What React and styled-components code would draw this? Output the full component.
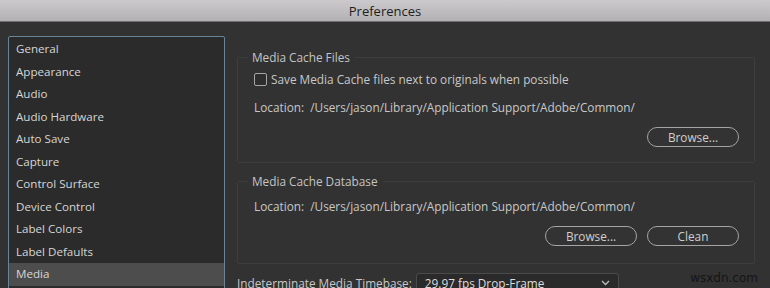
import styled, { createGlobalStyle } from "styled-components";

const GlobalStyle = createGlobalStyle`
  html, body {
    margin: 0;
    padding: 0;
    background: #323232;
    overflow: hidden;
  }
  body {
    font-family: "Open Sans", "DejaVu Sans", sans-serif;
  }
`;

const sections = [
  "General",
  "Appearance",
  "Audio",
  "Audio Hardware",
  "Auto Save",
  "Capture",
  "Control Surface",
  "Device Control",
  "Label Colors",
  "Label Defaults",
  "Media",
];

const cachePath = "/Users/jason/Library/Application Support/Adobe/Common/";

const Window = styled.div`
  width: 770px;
  height: 288px;
  display: flex;
  flex-direction: column;
  background: #323232;
  position: relative;
  overflow: hidden;
`;

const TitleBar = styled.div`
  height: 21px;
  flex: 0 0 auto;
  display: flex;
  align-items: center;
  justify-content: center;
  background: linear-gradient(#cbc9cb, #b3b1b3);
  border-bottom: 1px solid #6f6f6f;
  color: #1e1e1e;
  font-size: 13px;
`;

const Body = styled.div`
  display: flex;
  gap: 12px;
  padding: 14px 0 0 8px;
`;

const Sidebar = styled.ul`
  list-style: none;
  margin: 0;
  padding: 1px 0 0 0;
  width: 215px;
  height: 260px;
  flex: 0 0 auto;
  background: #2b2b2b;
  border: 1px solid #6a8598;
  border-radius: 2px;
`;

const SidebarItem = styled.li`
  height: 22.5px;
  line-height: 22.5px;
  padding-left: 7px;
  font-size: 11.6px;
  color: #d6d6d6;
  background: ${(p) => (p.$active ? "#4d4d4d" : "transparent")};
`;

const Content = styled.div`
  width: 518px;
  display: flex;
  flex-direction: column;
  gap: 11px;
  padding-top: 14px;
`;

const Group = styled.fieldset`
  margin: 0;
  padding: 0 15px 0 16px;
  border: 1px solid #3d3d3d;
  border-radius: 2px;
  height: ${(p) => p.$height}px;
  box-sizing: border-box;
`;

const Legend = styled.legend`
  margin-left: -7px;
  padding: 0 5px;
  font-size: 11.8px;
  line-height: 14px;
  color: #c4c4c4;
`;

const CheckRow = styled.label`
  display: flex;
  align-items: center;
  gap: 4px;
  margin-top: 7px;
  font-size: 11.8px;
  color: #c8c8c8;
`;

const Box = styled.span`
  width: 11px;
  height: 11px;
  border: 1px solid #a6a6a6;
  border-radius: 2px;
  background: #2e2e2e;
`;

const Location = styled.div`
  margin-top: ${(p) => p.$top}px;
  font-size: 11.8px;
  line-height: 16px;
  color: #c8c8c8;
  white-space: pre;
`;

const ButtonRow = styled.div`
  margin-top: ${(p) => p.$top}px;
  display: flex;
  justify-content: flex-end;
  gap: 10px;
`;

const PillButton = styled.button`
  width: 92px;
  height: 20px;
  padding: 0;
  border: 1.5px solid #a4a4a4;
  border-radius: 10px;
  background: #333333;
  color: #cfcfcf;
  font-family: inherit;
  font-size: 11.8px;
  line-height: 16px;
`;

const TimebaseRow = styled.div`
  display: flex;
  align-items: center;
  gap: 4px;
  margin-top: -2px;
  font-size: 11.8px;
  color: #c8c8c8;
`;

const Select = styled.div`
  width: 203px;
  height: 20px;
  box-sizing: border-box;
  display: flex;
  align-items: center;
  justify-content: space-between;
  padding: 0 8px;
  background: #2a2a2a;
  border: 1px solid #4a4a4a;
  border-radius: 3px;
  color: #dcdcdc;
  font-size: 11.8px;
`;

const Watermark = styled.div`
  position: absolute;
  right: 12px;
  bottom: 3px;
  font-family: "DejaVu Sans", sans-serif;
  font-size: 12px;
  color: #151515;
`;

const Chevron = () => (
  <svg width="9" height="6" viewBox="0 0 9 6">
    <path d="M1 1l3.5 3.5L8 1" fill="none" stroke="#bdbdbd" strokeWidth="1.3" />
  </svg>
);

export default function App() {
  return (
    <Window>
      <GlobalStyle />
      <TitleBar>Preferences</TitleBar>
      <Body>
        <Sidebar>
          {sections.map((s) => (
            <SidebarItem key={s} $active={s === "Media"}>
              {s}
            </SidebarItem>
          ))}
        </Sidebar>
        <Content>
          <Group $height={113}>
            <Legend>Media Cache Files</Legend>
            <CheckRow>
              <Box />
              Save Media Cache files next to originals when possible
            </CheckRow>
            <Location $top={12}>{`Location:  ${cachePath}`}</Location>
            <ButtonRow $top={12}>
              <PillButton>Browse...</PillButton>
            </ButtonRow>
          </Group>
          <Group $height={90}>
            <Legend>Media Cache Database</Legend>
            <Location $top={10}>{`Location:  ${cachePath}`}</Location>
            <ButtonRow $top={12}>
              <PillButton>Browse...</PillButton>
              <PillButton>Clean</PillButton>
            </ButtonRow>
          </Group>
          <TimebaseRow>
            Indeterminate Media Timebase:
            <Select>
              29.97 fps Drop-Frame
              <Chevron />
            </Select>
          </TimebaseRow>
        </Content>
      </Body>
      <Watermark>wsxdn.com</Watermark>
    </Window>
  );
}
